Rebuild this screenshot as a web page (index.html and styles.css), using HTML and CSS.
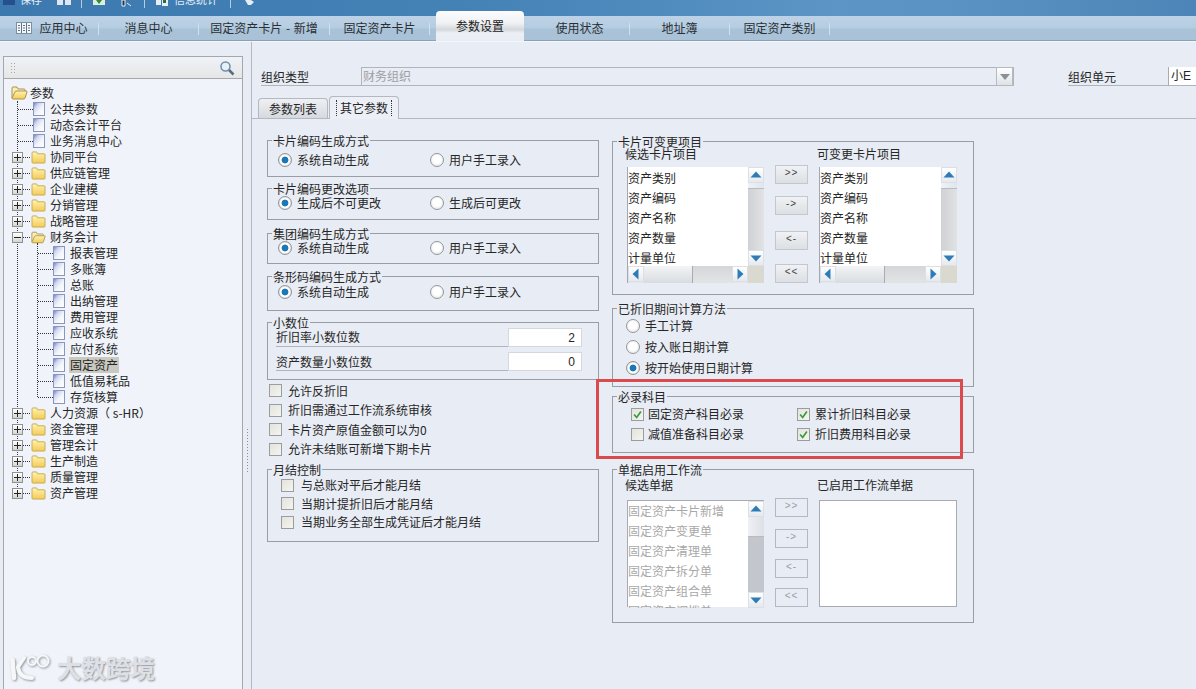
FILE: index.html
```html
<!DOCTYPE html>
<html lang="zh-CN">
<head>
<meta charset="utf-8">
<title>参数设置</title>
<link rel="stylesheet" href="styles.css">
</head>
<body>
<svg class="defs" width="0" height="0" aria-hidden="true">
  <defs>
    <linearGradient id="fy" x1="0" y1="0" x2="0" y2="1"><stop offset="0" stop-color="#fff3b4"/><stop offset="1" stop-color="#f4cc50"/></linearGradient>
    <linearGradient id="dg" x1="0" y1="0" x2="1" y2="1"><stop offset="0" stop-color="#5f74c4"/><stop offset="0.28" stop-color="#cfd6ee"/><stop offset="0.55" stop-color="#f2f4fa"/><stop offset="1" stop-color="#fff"/></linearGradient>
    <symbol id="folder" viewBox="0 0 16 14"><path d="M1 3V2q0-1 1-1h4l1 2h7q1 0 1 1v8q0 1-1 1H2q-1 0-1-1z" fill="url(#fy)" stroke="#c4a85a"/></symbol>
    <symbol id="folder-open" viewBox="0 0 17 14"><path d="M1 12V2q0-1 1-1h4l1 2h6q1 0 1 1v1" fill="#fbeeb0" stroke="#a8925a"/><path d="M1 12l3-6q.3-1 1-1h10q1.500 0 1 1l-2 6q-.3 1-1 1H2q-1 0-1-1z" fill="url(#fy)" stroke="#a8925a"/></symbol>
    <symbol id="doc" viewBox="0 0 12 14"><rect x="0.500" y="0.500" width="11" height="13" fill="url(#dg)" stroke="#8a96bc"/></symbol>
    <symbol id="tick" viewBox="0 0 13 13"><path d="M2.500 6.500l3 3.500 5-7" fill="none" stroke="#3c9a3c" stroke-width="2"/></symbol>
    <symbol id="up" viewBox="0 0 14 14"><path d="M7 3.500l5.500 6h-11z" fill="#2d7cb8"/></symbol>
    <symbol id="down" viewBox="0 0 14 14"><path d="M7 10.500l-5.500-6h11z" fill="#2d7cb8"/></symbol>
    <symbol id="left" viewBox="0 0 14 14"><path d="M3.500 7l6-5.500v11z" fill="#2d7cb8"/></symbol>
    <symbol id="right" viewBox="0 0 14 14"><path d="M10.500 7l-6-5.500v11z" fill="#2d7cb8"/></symbol>
  </defs>
</svg>

<div class="toolbar">
  <svg class="tb-icon m3" width="12" height="16"><rect x="0" y="0" width="12" height="5" fill="#24508e"/></svg>
  <span class="tb-text m5">保存</span>
  <svg class="tb-icon m15" width="15" height="16"><rect x="0" y="0" width="6" height="5" fill="#dfe8f2"/><rect x="8" y="0" width="6" height="5" fill="#dfe8f2"/></svg>
  <i class="tb-sep m9"></i>
  <svg class="tb-icon m11" width="12" height="16"><rect x="0" y="0" width="12" height="5" fill="#dfeeda"/><path d="M3 0h6L6 4z" fill="#2e8a3a"/></svg>
  <svg class="tb-icon m14" width="14" height="16"><path d="M3 0h3v6H3zM8 3l4 3" stroke="#e6edf4" fill="#1c3550"/></svg>
  <i class="tb-sep m11"></i>
  <svg class="tb-icon m11" width="13" height="16"><rect x="0" y="0" width="5" height="5" fill="#e8eef5"/><rect x="6" y="0" width="6" height="6" fill="#e8eef5"/><rect x="7" y="0" width="3" height="3" fill="#2f6d3a"/></svg>
  <span class="tb-text m5">信息统计</span>
  <i class="tb-sep m12"></i>
  <svg class="tb-icon m14" width="10" height="16"><path d="M0 0h6l3 2-3 3H3z" fill="#e4ecf5"/></svg>
</div>

<nav class="tabbar">
  <a class="tab w98"><svg class="tab-icon" width="16" height="12"><rect x="0.500" y="0.500" width="15" height="11" fill="#f4f6fa" stroke="#7c8ea0"/><path d="M5.500 1v10M10.500 1v10M2 3.500h2M2 6h2M2 8.500h2M7 3.500h2M7 6h2M7 8.500h2M12 3.500h2M12 6h2M12 8.500h2" stroke="#5f7488"/></svg>应用中心</a><i class="tab-sep"></i>
  <a class="tab w99">消息中心</a><i class="tab-sep"></i>
  <a class="tab w130 spaced">固定资产卡片 - 新增</a><i class="tab-sep"></i>
  <a class="tab w99">固定资产卡片</a><i class="tab-sep"></i>
  <a class="tab tab-active">参数设置</a>
  <a class="tab w99 tab-after">使用状态</a><i class="tab-sep"></i>
  <a class="tab w99">地址簿</a><i class="tab-sep"></i>
  <a class="tab w99">固定资产类别</a><i class="tab-sep"></i>
</nav>

<div class="workspace">
  <aside class="sidebar">
    <div class="searchbar">
      <i class="grip"></i>
      <svg class="search-icon" width="16" height="16" viewBox="0 0 16 16"><circle cx="6.500" cy="6.500" r="4.500" fill="#e4f0fa" stroke="#6f8ea8" stroke-width="1.500"/><path d="M10 10l4.500 4.500" stroke="#566c80" stroke-width="2.500"/></svg>
    </div>
    <div class="tree">
      <div class="row root"><svg class="folder-open"><use href="#folder-open"/></svg>参数</div>
      <div class="row leaf"><i class="dots"></i><svg class="doc"><use href="#doc"/></svg>公共参数</div>
      <div class="row leaf"><i class="dots"></i><svg class="doc"><use href="#doc"/></svg>动态会计平台</div>
      <div class="row leaf"><i class="dots"></i><svg class="doc"><use href="#doc"/></svg>业务消息中心</div>
      <div class="row branch"><i class="box plus"></i><i class="dots short"></i><svg class="folder"><use href="#folder"/></svg>协同平台</div>
      <div class="row branch"><i class="box plus"></i><i class="dots short"></i><svg class="folder"><use href="#folder"/></svg>供应链管理</div>
      <div class="row branch"><i class="box plus"></i><i class="dots short"></i><svg class="folder"><use href="#folder"/></svg>企业建模</div>
      <div class="row branch"><i class="box plus"></i><i class="dots short"></i><svg class="folder"><use href="#folder"/></svg>分销管理</div>
      <div class="row branch"><i class="box plus"></i><i class="dots short"></i><svg class="folder"><use href="#folder"/></svg>战略管理</div>
      <div class="row branch"><i class="box"></i><i class="dots short"></i><svg class="folder"><use href="#folder-open"/></svg>财务会计</div>
      <div class="subtree">
        <div class="row sub"><i class="dots"></i><svg class="doc"><use href="#doc"/></svg>报表管理</div>
        <div class="row sub"><i class="dots"></i><svg class="doc"><use href="#doc"/></svg>多账簿</div>
        <div class="row sub"><i class="dots"></i><svg class="doc"><use href="#doc"/></svg>总账</div>
        <div class="row sub"><i class="dots"></i><svg class="doc"><use href="#doc"/></svg>出纳管理</div>
        <div class="row sub"><i class="dots"></i><svg class="doc"><use href="#doc"/></svg>费用管理</div>
        <div class="row sub"><i class="dots"></i><svg class="doc"><use href="#doc"/></svg>应收系统</div>
        <div class="row sub"><i class="dots"></i><svg class="doc"><use href="#doc"/></svg>应付系统</div>
        <div class="row sub"><i class="dots"></i><svg class="doc"><use href="#doc"/></svg><span class="selected">固定资产</span></div>
        <div class="row sub"><i class="dots"></i><svg class="doc"><use href="#doc"/></svg>低值易耗品</div>
        <div class="row sub"><i class="dots"></i><svg class="doc"><use href="#doc"/></svg>存货核算</div>
      </div>
      <div class="row branch"><i class="box plus"></i><i class="dots short"></i><svg class="folder"><use href="#folder"/></svg>人力资源（ s-HR）</div>
      <div class="row branch"><i class="box plus"></i><i class="dots short"></i><svg class="folder"><use href="#folder"/></svg>资金管理</div>
      <div class="row branch"><i class="box plus"></i><i class="dots short"></i><svg class="folder"><use href="#folder"/></svg>管理会计</div>
      <div class="row branch"><i class="box plus"></i><i class="dots short"></i><svg class="folder"><use href="#folder"/></svg>生产制造</div>
      <div class="row branch"><i class="box plus"></i><i class="dots short"></i><svg class="folder"><use href="#folder"/></svg>质量管理</div>
      <div class="row branch"><i class="box plus"></i><i class="dots short"></i><svg class="folder"><use href="#folder"/></svg>资产管理</div>
    </div>
  </aside>
  <div class="splitter"><i class="split-grip"></i></div>

  <main class="main">
    <div class="org-row">
      <label class="org-label">组织类型</label>
      <div class="org-field">财务组织<span class="drop"><svg width="10" height="6"><path d="M0 0h10L5 6z" fill="#8c9096"/></svg></span></div>
      <label class="org-label unit">组织单元</label>
      <div class="org-input">小E</div>
    </div>
    <div class="subtabs">
      <a class="subtab">参数列表</a>
      <a class="subtab subtab-active"><span class="focus">其它参数</span></a>
    </div>
    <div class="panel">
      <div class="col-left">
        <section class="group g1">
          <span class="legend">卡片编码生成方式</span>
          <div class="opts"><span class="opt"><i class="radio on"></i>系统自动生成</span><span class="opt"><i class="radio"></i>用户手工录入</span></div>
        </section>
        <section class="group g2">
          <span class="legend">卡片编码更改选项</span>
          <div class="opts"><span class="opt"><i class="radio on"></i>生成后不可更改</span><span class="opt"><i class="radio"></i>生成后可更改</span></div>
        </section>
        <section class="group g3">
          <span class="legend">集团编码生成方式</span>
          <div class="opts"><span class="opt"><i class="radio on"></i>系统自动生成</span><span class="opt"><i class="radio"></i>用户手工录入</span></div>
        </section>
        <section class="group g4">
          <span class="legend">条形码编码生成方式</span>
          <div class="opts"><span class="opt"><i class="radio on"></i>系统自动生成</span><span class="opt"><i class="radio"></i>用户手工录入</span></div>
        </section>
        <section class="group g5">
          <span class="legend">小数位</span>
          <div class="num-row"><span class="num-label">折旧率小数位数</span><span class="num-input">2</span></div>
          <div class="num-row"><span class="num-label">资产数量小数位数</span><span class="num-input">0</span></div>
        </section>
        <div class="checks">
          <div class="check-row"><i class="cb"></i>允许反折旧</div>
          <div class="check-row"><i class="cb"></i>折旧需通过工作流系统审核</div>
          <div class="check-row"><i class="cb"></i>卡片资产原值金额可以为0</div>
          <div class="check-row"><i class="cb"></i>允许未结账可新增下期卡片</div>
        </div>
        <section class="group g7">
          <span class="legend">月结控制</span>
          <div class="month-row"><i class="cb"></i>与总账对平后才能月结</div>
          <div class="month-row"><i class="cb"></i>当期计提折旧后才能月结</div>
          <div class="month-row"><i class="cb"></i>当期业务全部生成凭证后才能月结</div>
        </section>
      </div>

      <div class="col-right">
        <section class="group r1">
          <span class="legend">卡片可变更项目</span>
          <div class="transfer">
            <div class="side">
              <div class="side-title">候选卡片项目</div>
              <div class="listbox">
                <div class="items"><div>资产类别</div><div>资产编码</div><div>资产名称</div><div>资产数量</div><div>计量单位</div></div>
                <div class="vbar"><span class="sb-btn"><svg><use href="#up"/></svg></span><i class="vthumb"></i><i class="vtrack"></i><span class="sb-btn"><svg><use href="#down"/></svg></span></div>
                <div class="hbar"><span class="sb-btn"><svg><use href="#left"/></svg></span><i class="hthumb"></i><i class="htrack"></i><span class="sb-btn"><svg><use href="#right"/></svg></span></div>
                <i class="corner"></i>
              </div>
            </div>
            <div class="movers">
              <button class="mv">&gt;&gt;</button><button class="mv">-&gt;</button><button class="mv">&lt;-</button><button class="mv">&lt;&lt;</button>
            </div>
            <div class="side">
              <div class="side-title">可变更卡片项目</div>
              <div class="listbox">
                <div class="items"><div>资产类别</div><div>资产编码</div><div>资产名称</div><div>资产数量</div><div>计量单位</div></div>
                <div class="vbar"><span class="sb-btn"><svg><use href="#up"/></svg></span><i class="vthumb"></i><i class="vtrack"></i><span class="sb-btn"><svg><use href="#down"/></svg></span></div>
                <div class="hbar"><span class="sb-btn"><svg><use href="#left"/></svg></span><i class="hthumb"></i><i class="htrack"></i><span class="sb-btn"><svg><use href="#right"/></svg></span></div>
                <i class="corner"></i>
              </div>
            </div>
          </div>
        </section>

        <section class="group r2">
          <span class="legend">已折旧期间计算方法</span>
          <div class="calc-row"><i class="radio"></i>手工计算</div>
          <div class="calc-row"><i class="radio"></i>按入账日期计算</div>
          <div class="calc-row"><i class="radio on"></i>按开始使用日期计算</div>
        </section>

        <section class="group r3">
          <span class="legend">必录科目</span>
          <div class="req-grid">
            <span class="req"><i class="cb"><svg><use href="#tick"/></svg></i>固定资产科目必录</span>
            <span class="req"><i class="cb"><svg><use href="#tick"/></svg></i>累计折旧科目必录</span>
            <span class="req"><i class="cb"></i>减值准备科目必录</span>
            <span class="req"><i class="cb"><svg><use href="#tick"/></svg></i>折旧费用科目必录</span>
          </div>
        </section>

        <section class="group r4">
          <span class="legend">单据启用工作流</span>
          <div class="transfer low">
            <div class="side">
              <div class="side-title">候选单据</div>
              <div class="listbox low-box">
                <div class="items disabled"><div>固定资产卡片新增</div><div>固定资产变更单</div><div>固定资产清理单</div><div>固定资产拆分单</div><div>固定资产组合单</div><div>固定资产调拨单</div></div>
                <div class="vbar"><span class="sb-btn"><svg><use href="#up"/></svg></span><i class="vthumb big"></i><i class="vtrack dark"></i><span class="sb-btn"><svg><use href="#down"/></svg></span></div>
              </div>
            </div>
            <div class="movers low-movers">
              <button class="mv off">&gt;&gt;</button><button class="mv off">-&gt;</button><button class="mv off">&lt;-</button><button class="mv off">&lt;&lt;</button>
            </div>
            <div class="side">
              <div class="side-title">已启用工作流单据</div>
              <div class="plainbox"></div>
            </div>
          </div>
        </section>
      </div>
    </div>
  </main>
</div>

<div class="highlight"></div>
<div class="watermark">
  <svg class="wm-logo" width="43" height="28" viewBox="0 0 43 28"><path d="M2.500 6l1.500 18" fill="none" stroke="#f6f7f9" stroke-width="4.500" stroke-linecap="round"/><path d="M14 4L8 13q1 11 14 11" fill="none" stroke="#f6f7f9" stroke-width="4" stroke-linecap="round"/><circle cx="22" cy="7" r="4" fill="none" stroke="#f6f7f9" stroke-width="2"/><circle cx="33" cy="7" r="5.500" fill="none" stroke="#f6f7f9" stroke-width="2"/></svg>
  <span class="wm-text">大数跨境</span>
</div>
</body>
</html>
```

FILE: styles.css
```css
* { box-sizing: border-box; }
html, body { margin: 0; padding: 0; }
body {
  width: 1196px; height: 689px; overflow: hidden; position: relative;
  background: #e8ecf4; color: #262626;
  font: 12px/14px "Noto Sans CJK SC", "Noto Sans", sans-serif;
}
i { display: block; font-style: normal; flex: none; }
.defs { position: absolute; }

/* toolbar */
.toolbar {
  height: 16px; display: flex; align-items: flex-start; overflow: hidden;
  background: linear-gradient(90deg, #3b79af 0%, #4582b6 40%, #5c95c6 70%, #5a92c3 80%, #4d85b8 100%);
}
.tb-icon { flex: none; display: block; }
.tb-text { color: #e6eef6; margin-top: -8px; font-size: 11px; white-space: nowrap; }
.tb-sep { width: 1px; height: 8px; background: #b4cde2; }
.m3 { margin-left: 3px; } .m5 { margin-left: 5px; } .m9 { margin-left: 9px; }
.m11 { margin-left: 11px; } .m12 { margin-left: 12px; } .m14 { margin-left: 14px; } .m15 { margin-left: 15px; }

/* main tabs */
.tabbar {
  height: 25px; display: flex; align-items: center; position: relative;
  background: linear-gradient(180deg, #bdd2e6 0%, #b6cde2 45%, #a8c2d8 55%, #a9c2d8 96%, #8ba2b6 96%);
  box-shadow: 0 1px 0 #f1f6fb;
}
.tab { display: flex; align-items: center; justify-content: center; height: 100%; padding-bottom: 2px; color: #2b2f33; white-space: nowrap; flex: none; }
.w98 { width: 98px; padding-left: 6px; }
.w99 { width: 99px; }
.w130 { width: 130px; }
.spaced { word-spacing: 1px; }
.tab-icon { margin-right: 7px; }
.tab-sep { width: 1px; height: 12px; background: #cfe0ee; }
.tab-active {
  width: 88px; height: 30px; margin: -5px 0 0 6px; align-self: flex-start; padding-bottom: 0;
  border-radius: 4px 4px 0 0; color: #222;
  background: linear-gradient(180deg, #fcfcfd 0%, #eff1f4 40%, #d5d8dc 62%, #eceff4 74%, #e8ecf4 100%);
}
.tab-after { margin-left: 6px; }

/* workspace */
.workspace { display: flex; height: 648px; }
.sidebar {
  width: 240px; margin: 15px 0 0 3px; flex: none;
  border: 1px solid #a4a8ad; border-bottom: 0; background: #f0f4fa;
}
.searchbar {
  height: 22px; border-bottom: 1px solid #a4a8ad; display: flex; align-items: center; justify-content: space-between;
  padding: 0 7px 0 6px; background: linear-gradient(180deg, #eff2f7, #e6e6e6);
}
.grip { width: 6px; height: 12px; background: radial-gradient(circle, #a4a8ac 0.7px, transparent 1px) 0 0 / 3px 3px; }
.tree { position: relative; padding-top: 6px; }
.tree::before { content: ""; position: absolute; left: 13px; top: 22px; height: 390px; border-left: 1px dotted #333; }
.row { height: 16px; display: flex; align-items: center; white-space: nowrap; }
.root { padding-left: 7px; }
.leaf { padding-left: 14px; }
.branch { padding-left: 8px; }
.sub { padding-left: 34px; }
.subtree { position: relative; }
.subtree::before { content: ""; position: absolute; left: 33px; top: -2px; height: 154px; border-left: 1px dotted #333; }
.dots { width: 15px; border-top: 1px dotted #333; }
.dots.short { width: 7px; }
.doc { width: 12px; height: 14px; margin-right: 5px; flex: none; }
.folder { width: 15px; height: 13px; margin: 0 4px 0 1px; flex: none; }
.folder-open { width: 17px; height: 14px; margin-right: 2px; flex: none; }
.box {
  width: 11px; height: 11px; border: 1px solid #8e9296; position: relative;
  background: linear-gradient(180deg, #fff, #d4d6cc);
}
.box::before { content: ""; position: absolute; left: 1px; right: 1px; top: 4px; height: 1px; background: #222; }
.box.plus::after { content: ""; position: absolute; top: 1px; bottom: 1px; left: 4px; width: 1px; background: #222; }
.selected { background: #c9c9c0; margin-left: -1px; padding: 1px 1px; }
.splitter { width: 9px; height: 100%; flex: none; border-right: 1px solid #b4b8c0; padding: 387px 0 0 3px; }
.split-grip { width: 3px; height: 44px; background: radial-gradient(circle, #8a8e94 0.6px, transparent 0.9px) 0 0 / 3px 3px; }

/* main */
.main { width: 944px; flex: none; }
.org-row { display: flex; height: 19px; margin: 26px 0 0 9px; }
.org-label { width: 100px; flex: none; padding-top: 2px; line-height: 15px; border-bottom: 1px solid #b0b4bc; }
.org-field {
  width: 653px; flex: none; position: relative; padding: 1px 0 0 1px; color: #9c9fa4;
  border: 1px solid #b0b4bc;
}
.drop {
  position: absolute; right: 0; top: -1px; bottom: -1px; width: 17px; display: flex; align-items: center; justify-content: center;
  border: 1px solid #b6bac0; background: linear-gradient(180deg, #fff, #dfe2e6);
}
.unit { margin-left: 54px; }
.org-input { width: 30px; flex: none; background: #fff; border-left: 1px solid #a8acb2; border-bottom: 1px solid #b0b4bc; padding: 2px 0 0 2px; font-family: "Liberation Sans", "Noto Sans CJK SC", sans-serif; }
.subtabs { display: flex; align-items: flex-end; height: 22px; margin: 10px 0 0 6px; }
.subtab {
  width: 70px; height: 20px; display: flex; align-items: center; justify-content: center;
  border: 1px solid #b4b8c0; border-bottom: 0; border-radius: 4px 4px 0 0;
  background: linear-gradient(180deg, #eef0f4, #d6d9de);
}
.subtab-active { height: 23px; margin: 0 0 -1px 1px; position: relative; background: #eceff6; }
.focus { padding: 1px 3px; border-left: 1px dotted #333; border-right: 1px dotted #333; }
.panel { display: flex; border-top: 1px solid #b4b8c0; padding: 21px 0 0 15px; height: 560px; }
.col-left { width: 332px; flex: none; }
.col-right { width: 362px; margin-left: 13px; flex: none; padding-top: 1px; }

/* groups */
.group { position: relative; border: 1px solid #9a9ea4; }
.legend { position: absolute; left: 4px; top: -7px; padding: 0 1px; background: #e8ecf4; white-space: nowrap; }
.opts { display: flex; padding-left: 10px; }
.opt { display: flex; align-items: center; gap: 5px; height: 16px; width: 152px; white-space: nowrap; }
.radio {
  width: 14px; height: 14px; border-radius: 50%; border: 1px solid #94989c;
  background: radial-gradient(circle at 50% 45%, #fff 40%, #dcdcd8 100%);
}
.radio.on { background: radial-gradient(circle, #1b78b8 0 3px, #fff 3.8px 4.800px, #d8d8d4 6px); }
.cb { width: 13px; height: 13px; border: 1px solid #9a9c9e; background: linear-gradient(135deg, #e4e4de, #f4f4f0); }
.cb svg { display: block; width: 11px; height: 11px; }
.g1 { height: 37px; padding-top: 11px; }
.g2 { height: 32px; margin-top: 11px; padding-top: 6px; }
.g3 { height: 31px; margin-top: 13px; padding-top: 6px; }
.g4 { height: 35px; margin-top: 12px; padding-top: 7px; }
.g5 { height: 58px; margin-top: 11px; padding: 5px 16px 0 8px; }
.num-row { display: flex; height: 19px; }
.num-row + .num-row { margin-top: 5px; }
.num-label { flex: 1; border-bottom: 1px solid #b0b4bc; padding-top: 2px; }
.num-row + .num-row .num-label { padding-top: 3px; }
.num-input {
  width: 74px; flex: none; background: #fff; border: 1px solid #d4d8de; text-align: right; padding: 2px 6px 0 0;
  font-family: "Liberation Sans", sans-serif;
}
.checks { margin: 1px 0 0 2px; }
.check-row { height: 19.5px; display: flex; align-items: center; gap: 6px; white-space: nowrap; }
.g7 { height: 73px; margin-top: 10px; padding: 6px 0 0 13px; }
.month-row { height: 18.5px; display: flex; align-items: center; gap: 7px; white-space: nowrap; }

/* transfer lists */
.r1 { height: 154px; padding-top: 5px; }
.r4 { height: 154px; margin-top: 16px; padding-top: 8px; }
.transfer { display: flex; padding-left: 14px; }
.side { width: 137px; flex: none; }
.side + .movers + .side { width: 138px; }
.side-title { margin-left: -2px; white-space: nowrap; position: relative; }
.listbox {
  margin-top: 6px; height: 116px; display: grid; grid-template-columns: 1fr 16px; grid-template-rows: 99px 17px;
  border-left: 1px solid #a4a8ae; background: #fff;
}
.items { overflow: hidden; }
.items div { height: 20px; line-height: 22px; white-space: nowrap; }
.items.disabled div { line-height: 20px; }
.vbar { display: flex; flex-direction: column; background: #d4d6da; }
.hbar { display: flex; background: #e4e6ea; }
.sb-btn {
  width: 16px; height: 16px; flex: none; border: 1px solid #dcdfe4;
  background: linear-gradient(180deg, #fff, #e6e9ee);
}
.sb-btn svg { display: block; width: 14px; height: 14px; }
.vthumb { height: 6px; background: linear-gradient(90deg, #eef2f6, #dfe6ee); border-bottom: 1px solid #b8bcc2; }
.vthumb.big { height: 20px; background: linear-gradient(90deg, #eef0f4, #dde0e6); }
.vtrack { flex: 1; background: linear-gradient(90deg, #cfd1d4, #e0e2e4); }
.vtrack.dark { background: #c3c6cc; }
.hthumb { width: 49px; background: linear-gradient(180deg, #f2f4f6, #d8dce0); border-right: 1px solid #a8acb0; }
.htrack { flex: 1; background: linear-gradient(180deg, #d4d6d8, #e2e4e6); }
.corner { background: #d9d9d0; }
.movers { width: 33px; margin: 18px 11px 0; flex: none; display: flex; flex-direction: column; }
.mv {
  width: 33px; height: 19px; flex: none; padding: 0 0 4px; border: 1px solid #c4c8cc; color: #444;
  background: linear-gradient(180deg, #f0f2f5, #dcdfe3); font: 10px/12px "Liberation Sans", sans-serif; letter-spacing: 1px;
}
.mv:nth-child(2) { margin-top: 12px; }
.mv:nth-child(3) { margin-top: 16px; }
.mv:nth-child(4) { margin-top: 14px; }
.low-movers { margin-top: 20px; }
.low-movers .mv:nth-child(2) { margin-top: 12px; }
.low-movers .mv:nth-child(3) { margin-top: 11px; }
.low-movers .mv:nth-child(4) { margin-top: 10px; }
.mv.off { background: #e8ecf4; border-color: #b4b8c0; color: #9a9da2; }
.low .side-title { margin-bottom: 8px; }
.low-box { margin-top: 0; height: 107px; grid-template-rows: 107px; border: 1px solid #a8acb2; border-width: 1px 0 0 1px; }
.items.disabled { color: #a8a8a8; }
.plainbox { height: 107px; background: #fff; border: 1px solid #a8acb2; }

/* right-hand radios and checks */
.r2 { height: 79px; margin-top: 13px; padding: 6px 0 0 13px; }
.calc-row { height: 21.3px; display: flex; align-items: center; gap: 5px; white-space: nowrap; }
.r3 { height: 57px; margin-top: 9px; padding: 7px 0 0 18px; }
.req-grid { display: grid; grid-template-columns: 166px 1fr; grid-auto-rows: 20px; }
.req { display: flex; align-items: center; gap: 4px; white-space: nowrap; }
.req:nth-child(even) { gap: 5px; }

/* overlays */
.highlight { position: absolute; left: 596px; top: 379px; width: 367px; height: 80px; border: 3px solid #db4b4d; }
.watermark { position: absolute; left: 10px; top: 653px; display: flex; align-items: center; gap: 4px; }
.wm-logo { display: block; filter: drop-shadow(1px 1px 1px #8e9298); }
.wm-text { font-size: 24.500px; line-height: 30px; font-weight: 700; color: #dde0e6; text-shadow: 1px 1px 2px #8e9298; white-space: nowrap; }
```
